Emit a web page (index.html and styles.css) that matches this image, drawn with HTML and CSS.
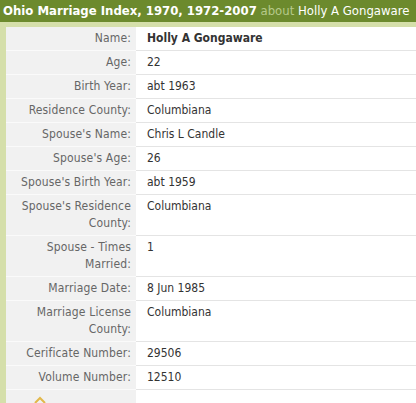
FILE: index.html
```html
<!DOCTYPE html>
<html>
<head>
<meta charset="utf-8">
<link rel="stylesheet" href="styles.css">
</head>
<body>
<div class="header"><span class="title">Ohio Marriage Index, 1970, 1972-2007</span> <span class="about">about</span> <span class="who">Holly A Gongaware</span></div>
<div class="record">
  <div class="lbl">Name:</div><div class="val strong">Holly A Gongaware</div>
  <div class="lbl">Age:</div><div class="val">22</div>
  <div class="lbl">Birth Year:</div><div class="val">abt 1963</div>
  <div class="lbl">Residence County:</div><div class="val">Columbiana</div>
  <div class="lbl">Spouse's Name:</div><div class="val">Chris L Candle</div>
  <div class="lbl">Spouse's Age:</div><div class="val">26</div>
  <div class="lbl">Spouse's Birth Year:</div><div class="val">abt 1959</div>
  <div class="lbl">Spouse's Residence County:</div><div class="val">Columbiana</div>
  <div class="lbl">Spouse - Times Married:</div><div class="val">1</div>
  <div class="lbl">Marriage Date:</div><div class="val">8 Jun 1985</div>
  <div class="lbl">Marriage License County:</div><div class="val">Columbiana</div>
  <div class="lbl">Cerificate Number:</div><div class="val">29506</div>
  <div class="lbl">Volume Number:</div><div class="val">12510</div>
  <div class="lbl foot"><svg class="chev" width="12" height="8" viewBox="0 0 12 8"><path d="M1 7 L6 2 L11 7" fill="none" stroke="#e2b84a" stroke-width="2"/></svg></div><div class="val foot"></div>
</div>
</body>
</html>
```
FILE: styles.css
```css
html, body {
  margin: 0;
  padding: 0;
  background: #fff;
}
body {
  font-family: "DejaVu Sans Condensed", "DejaVu Sans", sans-serif;
  font-size: 12px;
  width: 416px;
  height: 403px;
  overflow: hidden;
}
.header {
  background: #6c8a2d;
  height: 22px;
  line-height: 22px;
  padding-left: 3px;
  white-space: nowrap;
  overflow: hidden;
  font-size: 13px;
}
.title {
  color: #fff;
  font-weight: bold;
}
.about {
  color: #b6c98a;
}
.who {
  color: #fff;
}
.record {
  display: grid;
  grid-template-columns: 130px 1fr;
  border-top: 5px solid #d5dfaa;
  border-left: 6px solid #d5dfaa;
}
.lbl {
  background: #f1f1f1;
  color: #666;
  text-align: right;
  padding: 3px 5px 3px 8px;
  line-height: 17px;
  letter-spacing: 0.15px;
  border-bottom: 1px solid #fafafa;
}
.val {
  color: #333;
  padding: 3px 8px 3px 11px;
  line-height: 17px;
  border-bottom: 1px solid #e4e4e4;
}
.strong {
  font-weight: bold;
}
.foot {
  border-bottom: none;
  height: 20px;
  text-align: left;
}
.chev {
  display: block;
  margin: 3px 0 0 20px;
}
```
